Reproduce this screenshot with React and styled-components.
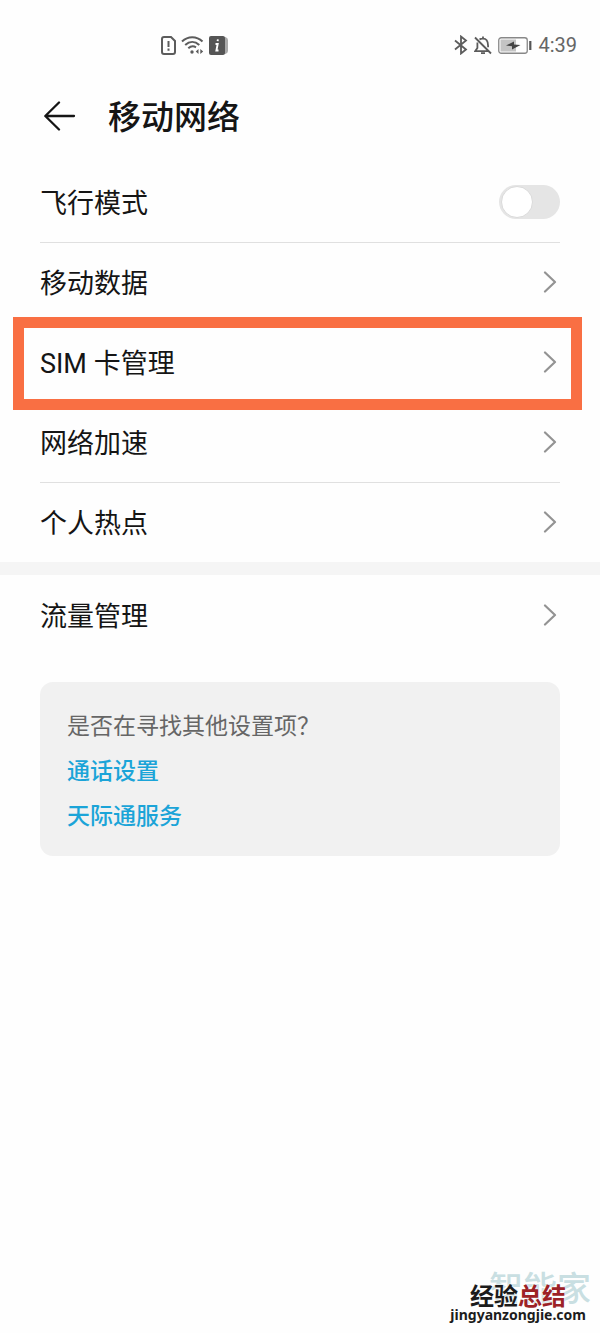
import { useState } from 'react'
import styled, { createGlobalStyle } from 'styled-components'

const GlobalStyle = createGlobalStyle`
  * {
    box-sizing: border-box;
  }

  body {
    margin: 0;
    background: #fefefe;
    color: #151515;
    font-family: Roboto, "Noto Sans CJK SC", sans-serif;
  }
`

const Page = styled.div`
  display: flex;
  flex-direction: column;
  min-height: 100vh;
`

const StatusBar = styled.header`
  display: flex;
  align-items: center;
  justify-content: space-between;
  height: 72px;
  padding: 18px 23px 0 161px;
  color: #5c5c5c;
`

const StatusGroup = styled.div`
  display: flex;
  align-items: center;
  gap: ${props => props.$gap};
`

const Clock = styled.time`
  font-size: 20px;
  line-height: 24px;
  color: #666;
`

const TitleBar = styled.div`
  display: flex;
  align-items: center;
  gap: 32px;
  height: 90px;
  padding: 0 43px;
`

const BackButton = styled.button`
  display: flex;
  padding: 0;
  border: 0;
  background: none;
  color: #151515;
  cursor: pointer;
`

const Title = styled.h1`
  margin: 0;
  padding-top: 2px;
  font-size: 33px;
  font-weight: 500;
  line-height: 48px;
`

const List = styled.ul`
  margin: 0;
  padding: 0 40px;
  list-style: none;
`

const Item = styled.li`
  position: relative;
  height: 80px;

  & + & {
    box-shadow: inset 0 1px #e0e0e0;
  }

  ${props => props.$highlighted && `
    &::after {
      content: '';
      position: absolute;
      z-index: 1;
      inset: -5px -22px -8px -27px;
      border: 11px solid #f96f43;
      pointer-events: none;
    }
  `}
`

const rowStyles = `
  display: flex;
  align-items: center;
  justify-content: space-between;
  height: 100%;
`

const RowLink = styled.a`
  ${rowStyles}
  padding-right: 3px;
  color: inherit;
  text-decoration: none;
`

const RowLabel = styled.label`
  ${rowStyles}
`

const RowText = styled.span`
  padding-top: 4px;
  font-size: 27px;
  line-height: 40px;
`

const Switch = styled.input`
  appearance: none;
  display: flex;
  align-items: center;
  width: 61px;
  height: 34px;
  margin: 0;
  padding: 0 2px;
  border-radius: 17px;
  background: ${props => (props.checked ? '#0a9ed9' : '#e5e5e5')};
  cursor: pointer;

  &::before {
    content: '';
    width: 30px;
    height: 30px;
    border: 1px solid #dadada;
    border-radius: 50%;
    background: #fff;
    margin-left: ${props => (props.checked ? 'auto' : '0')};
  }
`

const SectionGap = styled.div`
  height: 13px;
  background: #f5f5f5;
`

const Card = styled.section`
  margin: 27px 40px 0;
  padding: 22px 27px 17px;
  border-radius: 13px;
  background: #f1f1f1;
  font-size: 23px;
  line-height: 45px;
`

const CardTitle = styled.p`
  margin: 0;
  color: #666;
`

const CardLink = styled.a`
  display: block;
  width: fit-content;
  color: #1ba4d8;
  font-weight: 500;
  text-decoration: none;
`

const Watermark = styled.footer`
  position: relative;
  display: flex;
  flex-direction: column;
  align-items: flex-end;
  margin-top: auto;
  padding: 0 14px 10px 0;
  color: #1c1c1c;
`

const WatermarkBack = styled.span`
  position: absolute;
  right: 9px;
  bottom: 24px;
  color: #c9dfe2;
  font-size: 34px;
  font-weight: 500;
  line-height: 40px;
`

const WatermarkName = styled.span`
  position: relative;
  margin-right: 20px;
  font-size: 24px;
  font-weight: 700;
  line-height: 20px;
  text-shadow: 0 0 2px #fff, 0 0 2px #fff;
`

const Accent = styled.span`
  color: #9c2226;
`

const WatermarkUrl = styled.span`
  position: relative;
  font-family: "Noto Sans", sans-serif;
  font-size: 14px;
  font-weight: 700;
  line-height: 16px;
  text-shadow: 0 0 2px #fff, 0 0 2px #fff;
`

function SimAlertIcon() {
  return (
    <svg width="15" height="19" viewBox="0 0 15 19" fill="none" stroke="currentColor" strokeWidth="2">
      <path d="M1 3a2 2 0 0 1 2-2h7l4 4v11a2 2 0 0 1-2 2H3a2 2 0 0 1-2-2z" />
      <path d="M7.5 5v6M7.5 12.500v2.200" />
    </svg>
  )
}

function WifiIcon() {
  return (
    <svg width="23" height="20" viewBox="0 0 23 20" fill="none" stroke="currentColor" strokeWidth="2">
      <path d="M1 6.500c6-5.700 14.500-5.700 20.500 0M4.200 10c4.300-4 9.800-4 14.100 0M7.300 13.300c2.400-2.200 5.200-2.500 7.700-1" />
      <circle cx="11" cy="17" r="1.700" fill="currentColor" stroke="none" />
      <path d="M17.500 14v5l-2.800-2.500zM19.300 14v5l2.900-2.500z" fill="currentColor" stroke="none" />
    </svg>
  )
}

function InfoIcon() {
  return (
    <svg width="19" height="19" viewBox="0 0 19 19">
      <path d="M15 1h1.500Q19 2 19 4v11q0 2-2.500 3H15z" fill="#aaa" />
      <rect width="16" height="19" rx="2" fill="#555" />
      <path d="M6.500 8H8.700L7.400 14.500H9.500M8.900 3.400l-.3 1.800" fill="none" stroke="#fff" strokeWidth="1.900" />
    </svg>
  )
}

function BluetoothIcon() {
  return (
    <svg width="14" height="20" viewBox="0 0 14 20" fill="none" stroke="currentColor" strokeWidth="1.800">
      <path d="M1 5.500l11 9L7 18.500v-17l5 4-11 9" />
    </svg>
  )
}

function BellOffIcon() {
  return (
    <svg width="18" height="19" viewBox="0 0 18 19" fill="none" stroke="currentColor" strokeWidth="1.800">
      <path d="M1 1.500L17 17.500M5.500 3.500C7 2.300 11 2.100 12.700 4.200c1.600 1.900 1.300 4 1.400 7M3.400 6.500V12L1.200 15.200H14M9 .5v2M7 17.200h4" />
    </svg>
  )
}

function BatteryIcon() {
  return (
    <svg width="34" height="17" viewBox="0 0 34 17" fill="none">
      <rect x=".75" y=".75" width="28.500" height="15.500" rx="2.500" stroke="#888" strokeWidth="1.300" />
      <rect x="2.500" y="2.500" width="15.500" height="12" fill="#c4c4c4" />
      <path d="M8 8.500L16 4.500v3l6.500.5L14 12.500V9.300z" fill="#444" />
      <path d="M32.300 4v9" stroke="#555" strokeWidth="2.200" />
    </svg>
  )
}

function BackIcon() {
  return (
    <svg width="33" height="32" viewBox="0 0 33 32" fill="none" stroke="currentColor" strokeWidth="2.300" strokeLinecap="round" strokeLinejoin="round">
      <path d="M31 15H2.500M16 1.500L2.300 15 16 28.500" />
    </svg>
  )
}

function ChevronIcon() {
  return (
    <svg width="14" height="22" viewBox="0 0 14 22" fill="none" stroke="#939393" strokeWidth="2.200" strokeLinecap="round" strokeLinejoin="round">
      <path d="M2 1.500L12 11 2 20.500" />
    </svg>
  )
}

function LinkRow({ label, highlighted }) {
  return (
    <Item $highlighted={highlighted}>
      <RowLink href="#">
        <RowText>{label}</RowText>
        <ChevronIcon />
      </RowLink>
    </Item>
  )
}

export default function App() {
  const [airplane, setAirplane] = useState(false)

  return (
    <Page>
      <GlobalStyle />
      <StatusBar>
        <StatusGroup $gap="5px">
          <SimAlertIcon />
          <WifiIcon />
          <InfoIcon />
        </StatusGroup>
        <StatusGroup $gap="6px">
          <BluetoothIcon />
          <BellOffIcon />
          <BatteryIcon />
          <Clock>4:39</Clock>
        </StatusGroup>
      </StatusBar>

      <TitleBar>
        <BackButton type="button" aria-label="返回">
          <BackIcon />
        </BackButton>
        <Title>移动网络</Title>
      </TitleBar>

      <List>
        <Item>
          <RowLabel>
            <RowText>飞行模式</RowText>
            <Switch
              type="checkbox"
              checked={airplane}
              onChange={e => setAirplane(e.target.checked)}
            />
          </RowLabel>
        </Item>
        <LinkRow label="移动数据" />
        <LinkRow label="SIM 卡管理" highlighted />
        <LinkRow label="网络加速" />
        <LinkRow label="个人热点" />
      </List>

      <SectionGap />

      <List>
        <LinkRow label="流量管理" />
      </List>

      <Card>
        <CardTitle>是否在寻找其他设置项？</CardTitle>
        <CardLink href="#">通话设置</CardLink>
        <CardLink href="#">天际通服务</CardLink>
      </Card>

      <Watermark>
        <WatermarkBack>智能家</WatermarkBack>
        <WatermarkName>
          经验<Accent>总结</Accent>
        </WatermarkName>
        <WatermarkUrl>jingyanzongjie.com</WatermarkUrl>
      </Watermark>
    </Page>
  )
}
